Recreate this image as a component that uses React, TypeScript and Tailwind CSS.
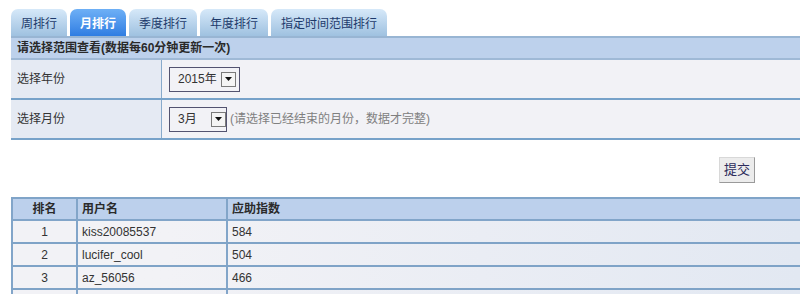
const tabs = ['周排行', '月排行', '季度排行', '年度排行', '指定时间范围排行'];

const rows = [
  { rank: '1', name: 'kiss20085537', score: '584' },
  { rank: '2', name: 'lucifer_cool', score: '504' },
  { rank: '3', name: 'az_56056', score: '466' },
  { rank: '', name: '', score: '' },
];

function Arrow() {
  return (
    <span className="ml-[4px] flex h-[15px] w-[15px] items-center justify-center border border-[#7a7a7a] bg-[#f4f4f4]">
      <svg width="7" height="4" viewBox="0 0 7 4">
        <path d="M0 0h7L3.5 4z" fill="#111" />
      </svg>
    </span>
  );
}

export default function App() {
  return (
    <div
      className="h-[294px] w-[800px] overflow-hidden bg-white text-[12px] text-[#333]"
      style={{ fontFamily: '"Liberation Sans", "Noto Sans CJK SC", sans-serif' }}
    >
      <div className="ml-[11px] pt-[9px]">
        {/* tabs */}
        <div className="flex h-[27px] gap-[3px]">
          {tabs.map((t, i) => (
            <div
              key={t}
              className={`flex items-center rounded-t-[7px] px-[10px] pt-[2px] ${
                i === 1
                  ? 'bg-gradient-to-b from-[#6eb0f6] to-[#2f7de2] font-bold text-white'
                  : 'bg-gradient-to-b from-[#d6e9f9] to-[#9fc1e0] text-[#1d3a6b]'
              }`}
            >
              {t}
            </div>
          ))}
        </div>

        {/* filter box */}
        <div className="border-t-2 border-[#98b5d3]">
          <div className="flex h-[22px] items-center border-b-2 border-[#9fb9d6] bg-[#bdd1ec] pl-[6px] font-bold text-[#2a2a2a]">
            请选择范围查看(数据每60分钟更新一次)
          </div>
          <div className="flex h-[40px] border-b-2 border-[#77a2c9]">
            <div className="flex w-[151px] items-center border-r border-[#88aacb] bg-[#e5eaf3] pl-[6px]">选择年份</div>
            <div className="flex flex-1 items-center bg-[#f2f2f6] pl-[7px]">
              <div className="flex h-[25px] w-[71px] items-center border border-[#535370] bg-[#f2f2f6] pl-[8px]">
                2015年
                <Arrow />
              </div>
            </div>
          </div>
          <div className="flex h-[40px] border-b-2 border-[#77a2c9]">
            <div className="flex w-[151px] items-center border-r border-[#88aacb] bg-[#e5eaf3] pl-[6px]">选择月份</div>
            <div className="flex flex-1 items-center bg-[#f2f2f6] pl-[7px]">
              <div className="flex h-[25px] w-[58px] items-center border border-[#535370] bg-[#f2f2f6] pl-[8px]">
                3月
                <span className="ml-[10px] flex">
                  <Arrow />
                </span>
              </div>
              <span className="ml-[3px] text-[#808080]">(请选择已经结束的月份，数据才完整)</span>
            </div>
          </div>
        </div>

        {/* submit */}
        <div className="flex h-[57px] items-center justify-end pr-[45px]">
          <button className="mt-[2px] h-[26px] w-[36px] border border-[#d8d8d8] border-r-[#9a9a9a] border-b-[#9a9a9a] bg-[#ececec] text-[13px] text-[#2b2b5b]">
            提交
          </button>
        </div>

        {/* table */}
        <div className="border-t-2 border-[#80a4c8]">
          <div className="flex h-[22px] border-b-2 border-[#82a5c9] bg-[#bcd0ec] font-bold text-[#2a2a2a]">
            <div className="flex w-[67px] items-center justify-center border-x-2 border-[#82a5c9]">排名</div>
            <div className="flex w-[150px] items-center border-r-2 border-[#82a5c9] pl-[4px]">用户名</div>
            <div className="flex flex-1 items-center pl-[4px]">应助指数</div>
          </div>
          {rows.map((r, i) => (
            <div
              key={i}
              className="flex h-[23px] border-b-2 border-[#7fa3c7] bg-gradient-to-r from-[#f2f2f6] from-20% to-[#e2e8f2]"
            >
              <div className="flex w-[67px] items-center justify-center border-x-2 border-[#82a5c9]">{r.rank}</div>
              <div className="flex w-[150px] items-center border-r-2 border-[#82a5c9] pl-[4px]">{r.name}</div>
              <div className="flex flex-1 items-center pl-[4px]">{r.score}</div>
            </div>
          ))}
        </div>
      </div>
    </div>
  );
}
